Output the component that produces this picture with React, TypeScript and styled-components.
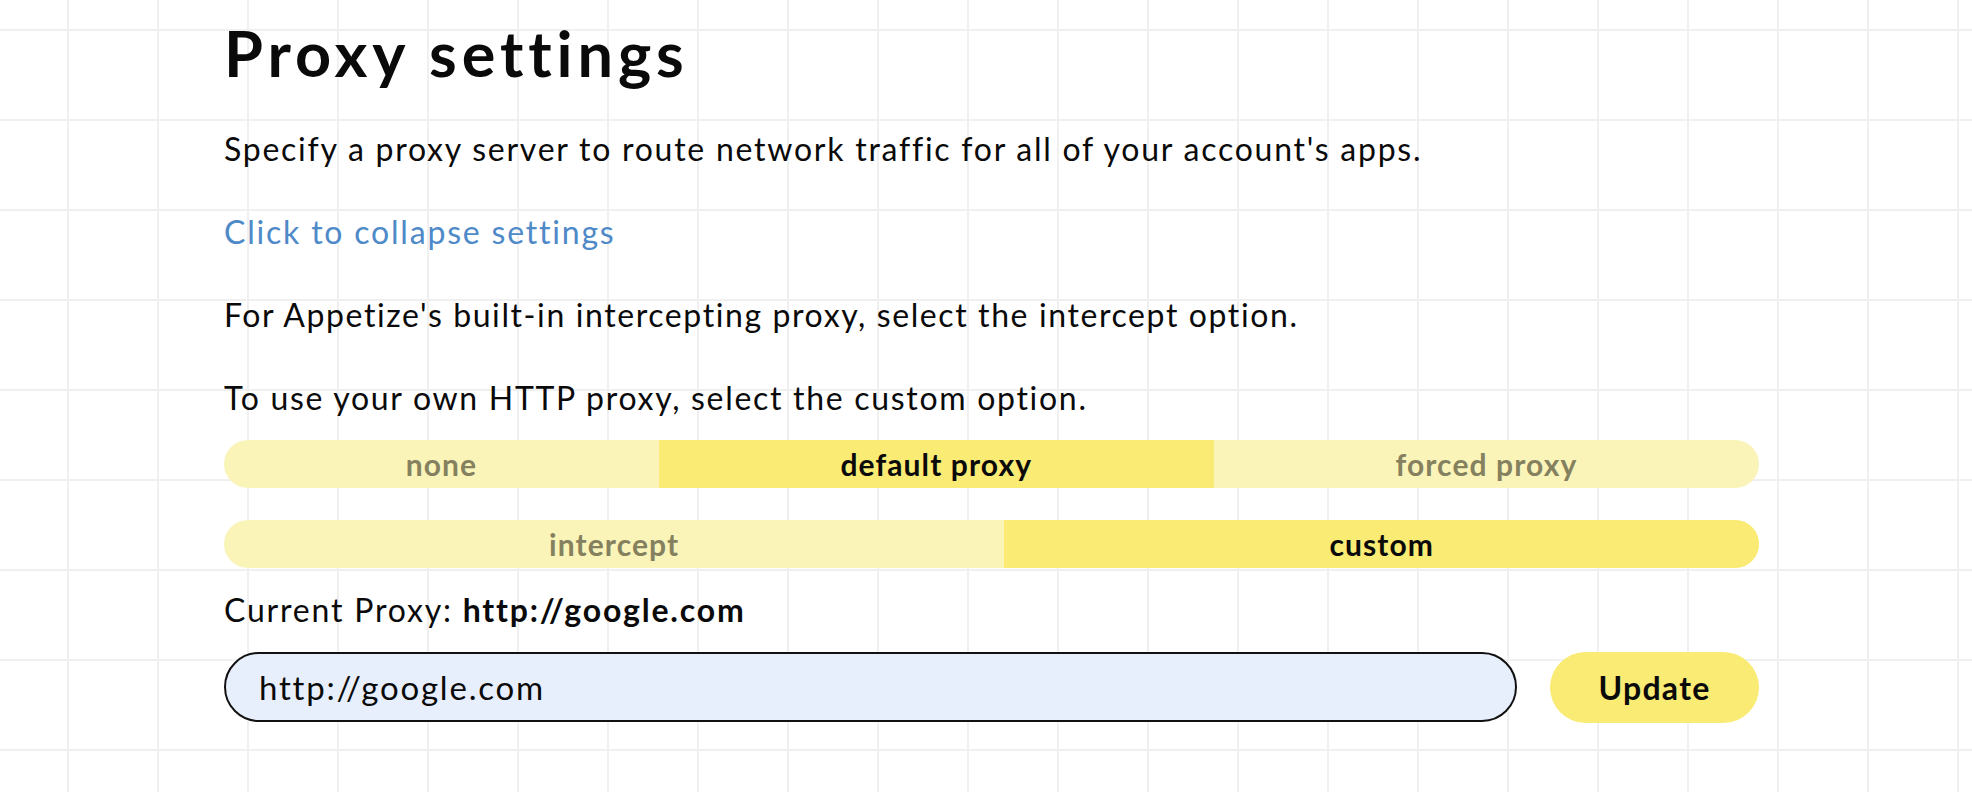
import React, { useState } from 'react'
import styled, { createGlobalStyle } from 'styled-components'

const GlobalStyle = createGlobalStyle`
  html, body {
    margin: 0;
    padding: 0;
  }
  body {
    min-height: 100vh;
    font-family: Lato, "Liberation Sans", sans-serif;
    color: #0a0a0a;
    background-color: #ffffff;
    background-image:
      linear-gradient(to right, #f0f0f0 0, #f0f0f0 2px, transparent 2px),
      linear-gradient(to bottom, #f0f0f0 0, #f0f0f0 2px, transparent 2px);
    background-size: 90px 90px;
    background-position: 67px 29px;
  }
`

const Page = styled.main`
  padding: 17px 0 0 224px;
  width: 1535px;
  display: flex;
  flex-direction: column;
`

const Title = styled.h1`
  margin: 0;
  font-size: 63px;
  line-height: 72px;
  font-weight: 700;
  letter-spacing: 4.9px;
`

const Paragraph = styled.p<{ $gap?: number; $spacing?: number }>`
  margin: ${(p) => p.$gap ?? 43}px 0 0;
  font-size: 32px;
  line-height: 40px;
  letter-spacing: ${(p) => p.$spacing ?? 1.65}px;
`

const Link = styled.a`
  display: block;
  margin-top: 43px;
  font-size: 32px;
  line-height: 40px;
  letter-spacing: 1.8px;
  color: #4e89c8;
  text-decoration: none;
  cursor: pointer;
`

const Segmented = styled.div<{ $gap: number }>`
  display: flex;
  height: 48px;
  margin-top: ${(p) => p.$gap}px;
  border-radius: 24px;
  overflow: hidden;
  background: #faf4b9;
`

const Segment = styled.button<{ $active: boolean }>`
  flex: 1 1 auto;
  border: 0;
  padding: 0;
  font-family: inherit;
  font-size: 30px;
  line-height: 48px;
  font-weight: 700;
  letter-spacing: 1.1px;
  cursor: pointer;
  background: ${(p) => (p.$active ? '#f9eb73' : 'transparent')};
  color: ${(p) => (p.$active ? '#0a0a0a' : '#85815f')};
`

const Current = styled.p`
  margin: 22px 0 0;
  font-size: 32px;
  line-height: 40px;
  letter-spacing: 1.8px;

  b {
    font-weight: 700;
  }
`

const Row = styled.div`
  display: flex;
  gap: 33px;
  margin-top: 22px;
`

const Input = styled.input`
  flex: 1;
  min-width: 0;
  height: 70px;
  box-sizing: border-box;
  border: 2px solid #111111;
  border-radius: 35px;
  padding: 0 33px;
  background: #e8effc;
  font-family: inherit;
  font-size: 33px;
  letter-spacing: 1.8px;
  color: #0a0a0a;
  outline: none;
`

const Button = styled.button`
  width: 209px;
  height: 71px;
  border: 0;
  border-radius: 36px;
  background: #f9eb73;
  font-family: inherit;
  font-size: 32px;
  font-weight: 700;
  letter-spacing: 1.3px;
  color: #0a0a0a;
  cursor: pointer;
`

function Toggle({
  options,
  value,
  onChange,
  gap,
}: {
  options: string[]
  value: string
  onChange(v: string): void
  gap: number
}) {
  return (
    <Segmented $gap={gap}>
      {options.map((o) => (
        <Segment key={o} $active={o === value} onClick={() => onChange(o)}>
          {o}
        </Segment>
      ))}
    </Segmented>
  )
}

export default function App() {
  const [mode, setMode] = useState('default proxy')
  const [kind, setKind] = useState('custom')
  const [draft, setDraft] = useState('http://google.com')
  const [proxy, setProxy] = useState('http://google.com')

  return (
    <>
      <GlobalStyle />
      <Page>
        <Title>Proxy settings</Title>
        <Paragraph $gap={40} $spacing={1.75}>
          Specify a proxy server to route network traffic for all of your account's apps.
        </Paragraph>
        <Link>Click to collapse settings</Link>
        <Paragraph $spacing={1.6}>
          For Appetize's built-in intercepting proxy, select the intercept option.
        </Paragraph>
        <Paragraph $spacing={1.7}>To use your own HTTP proxy, select the custom option.</Paragraph>
        <Toggle
          gap={22}
          options={['none', 'default proxy', 'forced proxy']}
          value={mode}
          onChange={setMode}
        />
        <Toggle gap={32} options={['intercept', 'custom']} value={kind} onChange={setKind} />
        <Current>
          Current Proxy: <b>{proxy}</b>
        </Current>
        <Row>
          <Input value={draft} onChange={(e) => setDraft(e.target.value)} />
          <Button onClick={() => setProxy(draft)}>Update</Button>
        </Row>
      </Page>
    </>
  )
}
